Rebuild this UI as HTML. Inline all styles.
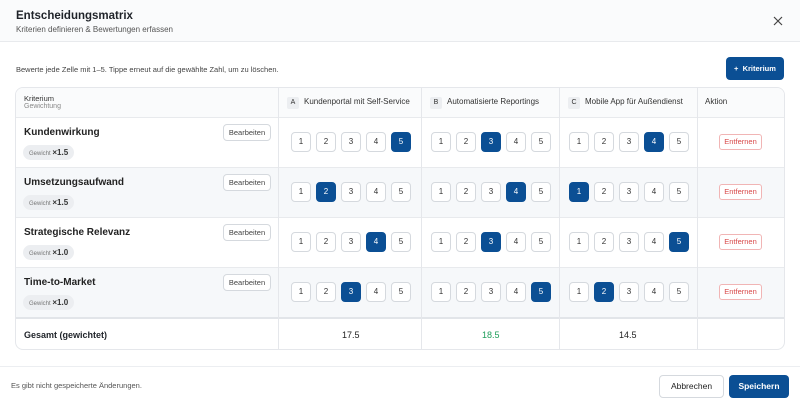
<!DOCTYPE html>
<html><head><meta charset="utf-8"><style>
*{box-sizing:border-box;margin:0;padding:0}
body{width:800px;height:406px;background:#fff;font-family:"Liberation Sans",sans-serif;color:#1f2329;position:relative;overflow:hidden}
.a{position:absolute}
.hdr{left:0;top:0;width:800px;height:42px;background:#fafbfc;border-bottom:1px solid #e8eaed}
.t{font-size:11.5px;font-weight:bold;left:16px;top:10px;color:#1f2329}
.st{font-size:8px;color:#555;left:16px;top:25px}
.tbl{left:15px;top:87px;width:770px;height:263px;border:1px solid #e5e7eb;border-radius:8px;overflow:hidden}
.row{position:absolute;left:0;width:770px;border-top:1px solid #e8eaed}
.alt{background:#f6f8fa}
.vl{position:absolute;top:0;height:263px;width:1px;background:#e5e7eb}
.sb{position:absolute;width:20px;height:20px;border:1px solid #d5d9de;border-radius:4px;background:#fff;font-size:8px;text-align:center;line-height:18px;color:#333}
.sel{background:#0b4f94;border-color:#0b4f94;color:#fff}
.nm{position:absolute;left:8px;font-size:10px;font-weight:bold;color:#222}
.bb{position:absolute;left:207px;width:48px;height:17px;border:1px solid #d5d9de;border-radius:4px;background:#fff;font-size:7.5px;line-height:15px;text-align:center;color:#444}
.gw{position:absolute;left:7px;height:15px;padding:0 6px;border-radius:8px;background:#eceef1;font-size:6px;line-height:15px;color:#777}
.gw b{font-size:8px;color:#333;font-weight:bold}
.ent{position:absolute;left:703px;width:43px;height:16px;border:1px solid #f1b5b5;border-radius:3px;font-size:7.5px;line-height:14px;text-align:center;color:#d84a4a;background:#fff}
.ch{position:absolute;top:9px;font-size:8px;color:#333}
.ch i{font-style:normal;display:inline-block;width:12px;height:12px;background:#eceef1;border-radius:2px;text-align:center;line-height:12px;font-size:7px;margin-right:5px}
.tot{position:absolute;font-size:9px;font-weight:bold;top:13px}
</style></head><body>
<div class="a hdr"></div>
<div class="a t">Entscheidungsmatrix</div>
<div class="a st">Kriterien definieren &amp; Bewertungen erfassen</div>
<svg class="a" style="left:773px;top:16px" width="10" height="10"><path d="M1 1L9 9M9 1L1 9" stroke="#444" stroke-width="1.2"/></svg>
<div class="a" style="left:16px;top:65px;font-size:7.5px;color:#444">Bewerte jede Zelle mit 1–5. Tippe erneut auf die gewählte Zahl, um zu löschen.</div>
<div class="a" style="left:726px;top:57px;width:58px;height:23px;background:#0b4f94;border-radius:4px;color:#fff;font-size:7.5px;font-weight:bold;line-height:23px;text-align:center">+&nbsp; Kriterium</div>

<div class="a tbl">
<div class="row" style="top:0;height:30px;border-top:none;background:#fafbfc"></div>
<div class="a" style="left:8px;top:6px;font-size:7.5px;color:#333">Kriterium</div>
<div class="a" style="left:8px;top:15px;font-size:7px;color:#888">Gewichtung</div>
<div class="ch" style="left:271px"><i>A</i>Kundenportal mit Self-Service</div>
<div class="ch" style="left:414px"><i>B</i>Automatisierte Reportings</div>
<div class="ch" style="left:552px"><i>C</i>Mobile App für Außendienst</div>
<div class="ch" style="left:689px">Aktion</div>

<div class="row" style="top:29px;height:51px"></div>
<div class="row alt" style="top:79px;height:51px"></div>
<div class="row" style="top:129px;height:51px"></div>
<div class="row alt" style="top:179px;height:51px"></div>
<div class="row" style="top:229px;height:34px;border-top:2px solid #e2e5e9"></div>

<div class="vl" style="left:262px"></div><div class="vl" style="left:405px"></div><div class="vl" style="left:543px"></div><div class="vl" style="left:681px"></div>

<div class="nm" style="top:39px">Kundenwirkung</div><div class="bb" style="top:36px">Bearbeiten</div><div class="gw" style="top:57px">Gewicht <b>×1.5</b></div>
<div class="nm" style="top:89px">Umsetzungsaufwand</div><div class="bb" style="top:86px">Bearbeiten</div><div class="gw" style="top:107px">Gewicht <b>×1.5</b></div>
<div class="nm" style="top:139px">Strategische Relevanz</div><div class="bb" style="top:136px">Bearbeiten</div><div class="gw" style="top:157px">Gewicht <b>×1.0</b></div>
<div class="nm" style="top:189px">Time-to-Market</div><div class="bb" style="top:186px">Bearbeiten</div><div class="gw" style="top:207px">Gewicht <b>×1.0</b></div>

<div class="sb" style="left:275px;top:44px">1</div><div class="sb" style="left:300px;top:44px">2</div><div class="sb" style="left:325px;top:44px">3</div><div class="sb" style="left:350px;top:44px">4</div><div class="sb sel" style="left:375px;top:44px">5</div>
<div class="sb" style="left:415px;top:44px">1</div><div class="sb" style="left:440px;top:44px">2</div><div class="sb sel" style="left:465px;top:44px">3</div><div class="sb" style="left:490px;top:44px">4</div><div class="sb" style="left:515px;top:44px">5</div>
<div class="sb" style="left:553px;top:44px">1</div><div class="sb" style="left:578px;top:44px">2</div><div class="sb" style="left:603px;top:44px">3</div><div class="sb sel" style="left:628px;top:44px">4</div><div class="sb" style="left:653px;top:44px">5</div>
<div class="ent" style="top:46px">Entfernen</div>
<div class="sb" style="left:275px;top:94px">1</div><div class="sb sel" style="left:300px;top:94px">2</div><div class="sb" style="left:325px;top:94px">3</div><div class="sb" style="left:350px;top:94px">4</div><div class="sb" style="left:375px;top:94px">5</div>
<div class="sb" style="left:415px;top:94px">1</div><div class="sb" style="left:440px;top:94px">2</div><div class="sb" style="left:465px;top:94px">3</div><div class="sb sel" style="left:490px;top:94px">4</div><div class="sb" style="left:515px;top:94px">5</div>
<div class="sb sel" style="left:553px;top:94px">1</div><div class="sb" style="left:578px;top:94px">2</div><div class="sb" style="left:603px;top:94px">3</div><div class="sb" style="left:628px;top:94px">4</div><div class="sb" style="left:653px;top:94px">5</div>
<div class="ent" style="top:96px">Entfernen</div>
<div class="sb" style="left:275px;top:144px">1</div><div class="sb" style="left:300px;top:144px">2</div><div class="sb" style="left:325px;top:144px">3</div><div class="sb sel" style="left:350px;top:144px">4</div><div class="sb" style="left:375px;top:144px">5</div>
<div class="sb" style="left:415px;top:144px">1</div><div class="sb" style="left:440px;top:144px">2</div><div class="sb sel" style="left:465px;top:144px">3</div><div class="sb" style="left:490px;top:144px">4</div><div class="sb" style="left:515px;top:144px">5</div>
<div class="sb" style="left:553px;top:144px">1</div><div class="sb" style="left:578px;top:144px">2</div><div class="sb" style="left:603px;top:144px">3</div><div class="sb" style="left:628px;top:144px">4</div><div class="sb sel" style="left:653px;top:144px">5</div>
<div class="ent" style="top:146px">Entfernen</div>
<div class="sb" style="left:275px;top:194px">1</div><div class="sb" style="left:300px;top:194px">2</div><div class="sb sel" style="left:325px;top:194px">3</div><div class="sb" style="left:350px;top:194px">4</div><div class="sb" style="left:375px;top:194px">5</div>
<div class="sb" style="left:415px;top:194px">1</div><div class="sb" style="left:440px;top:194px">2</div><div class="sb" style="left:465px;top:194px">3</div><div class="sb" style="left:490px;top:194px">4</div><div class="sb sel" style="left:515px;top:194px">5</div>
<div class="sb" style="left:553px;top:194px">1</div><div class="sb sel" style="left:578px;top:194px">2</div><div class="sb" style="left:603px;top:194px">3</div><div class="sb" style="left:628px;top:194px">4</div><div class="sb" style="left:653px;top:194px">5</div>
<div class="ent" style="top:196px">Entfernen</div>

<div class="tot" style="left:8px;top:242px">Gesamt (gewichtet)</div>
<div class="tot" style="left:326px;top:242px;font-weight:normal;color:#222">17.5</div>
<div class="tot" style="left:466px;top:242px;font-weight:normal;color:#1e9e5a">18.5</div>
<div class="tot" style="left:603px;top:242px;font-weight:normal;color:#222">14.5</div>
</div>

<div class="a" style="left:0;top:366px;width:800px;height:1px;background:#eceef1"></div>
<div class="a" style="left:11px;top:381px;font-size:7.5px;color:#555">Es gibt nicht gespeicherte Änderungen.</div>
<div class="a" style="left:659px;top:375px;width:65px;height:23px;border:1px solid #d5d9de;border-radius:4px;font-size:8.5px;line-height:21px;text-align:center;color:#222;background:#fff">Abbrechen</div>
<div class="a" style="left:729px;top:375px;width:60px;height:23px;background:#0b4f94;border-radius:4px;font-size:8.5px;font-weight:bold;line-height:23px;text-align:center;color:#fff">Speichern</div>
</body></html>
